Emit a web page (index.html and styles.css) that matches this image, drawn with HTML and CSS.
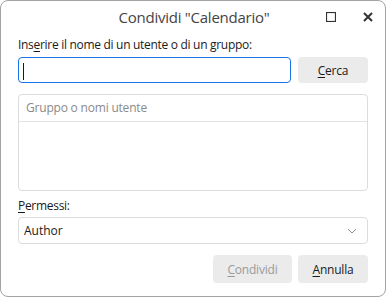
FILE: index.html
```html
<!DOCTYPE html>
<html lang="it">
  <head>
    <meta charset="UTF-8" />
    <title>Condividi "Calendario"</title>
    <link rel="stylesheet" href="styles.css">
  </head>
  <body>
    <div class="window">
      <div class="titlebar">
        <span class="title">Condividi "Calendario"</span>
        <span class="ctrl max">
          <svg width="10" height="10" viewBox="0 0 10 10"><rect x="0.5" y="0.5" width="9" height="9" fill="none" stroke="#333" stroke-width="1.2"/></svg>
        </span>
        <span class="ctrl close">
          <svg width="10" height="10" viewBox="0 0 10 10"><path d="M1 1L9 9M9 1L1 9" stroke="#333" stroke-width="2"/></svg>
        </span>
      </div>
      <div class="content">
        <div class="label">Ins<u>e</u>rire il nome di un utente o di un gruppo:</div>
        <div class="search-row">
          <div class="input"><span class="caret"></span></div>
          <button class="btn"><u>C</u>erca</button>
        </div>
        <div class="list">
          <div class="list-head">Gruppo o nomi utente</div>
        </div>
        <div class="label perm"><u>P</u>ermessi:</div>
        <div class="select">
          <span>Author</span>
          <svg width="10" height="6" viewBox="0 0 10 6"><path d="M1 1L5 5L9 1" fill="none" stroke="#8a8a8a" stroke-width="1"/></svg>
        </div>
        <div class="actions">
          <button class="btn wide disabled"><u>C</u>ondividi</button>
          <button class="btn"><u>A</u>nnulla</button>
        </div>
      </div>
    </div>
  </body>
</html>
```

FILE: styles.css
```css
* {
  margin: 0;
  padding: 0;
  box-sizing: border-box;
  font-family: "Open Sans", "Noto Sans", sans-serif;
}
body {
  background: #ffffff;
  color: #1a1a1a;
  width: 386px;
  height: 297px;
}
.window {
  width: 386px;
  height: 297px;
  border: 1px solid #a3a3a3;
  border-radius: 8px;
  background: #ffffff;
}
.titlebar {
  height: 32px;
  display: flex;
  align-items: center;
  position: relative;
}
.title {
  flex: 1;
  text-align: center;
  font-size: 15px;
  letter-spacing: -0.25px;
  color: #444444;
  padding-left: 2px;
  padding-bottom: 1px;
}
.ctrl {
  position: absolute;
  top: 11px;
  display: flex;
}
.ctrl.max {
  left: 325px;
}
.ctrl.close {
  left: 362px;
}
.content {
  padding: 4px 17px 0 17px;
}
.label {
  font-size: 12px;
  letter-spacing: -0.3px;
  line-height: 16px;
  height: 16px;
  color: #1a1a1a;
}
.label u,
.btn u {
  text-underline-offset: 2px;
}
.search-row {
  display: flex;
  gap: 7px;
  margin-top: 4px;
}
.input {
  width: 273px;
  height: 26px;
  border: 1px solid #1a73e8;
  border-radius: 4px;
  padding: 5px 4px;
}
.caret {
  display: block;
  width: 1px;
  height: 17px;
  background: #1a1a1a;
}
.btn {
  width: 70px;
  height: 26px;
  border: none;
  border-radius: 4px;
  background: #ebebeb;
  font-size: 12px;
  letter-spacing: -0.2px;
  color: #1a1a1a;
}
.list {
  margin-top: 11px;
  height: 97px;
  border: 1px solid #dcdcdc;
  border-radius: 4px;
}
.list-head {
  height: 27px;
  border-bottom: 1px solid #e3e3e3;
  font-size: 12px;
  letter-spacing: -0.2px;
  line-height: 26px;
  padding-left: 7px;
  color: #8a8a8a;
}
.label.perm {
  margin-top: 7px;
}
.select {
  margin-top: 3px;
  height: 27px;
  border: 1px solid #dcdcdc;
  border-radius: 4px;
  display: flex;
  align-items: center;
  justify-content: space-between;
  padding: 0 10px 0 5px;
  font-size: 12px;
}
.actions {
  display: flex;
  justify-content: flex-end;
  gap: 6px;
  margin-top: 11px;
}
.actions .btn {
  height: 28px;
}
.btn.wide {
  width: 79px;
}
.btn.disabled {
  color: #9a9a9a;
}
```
